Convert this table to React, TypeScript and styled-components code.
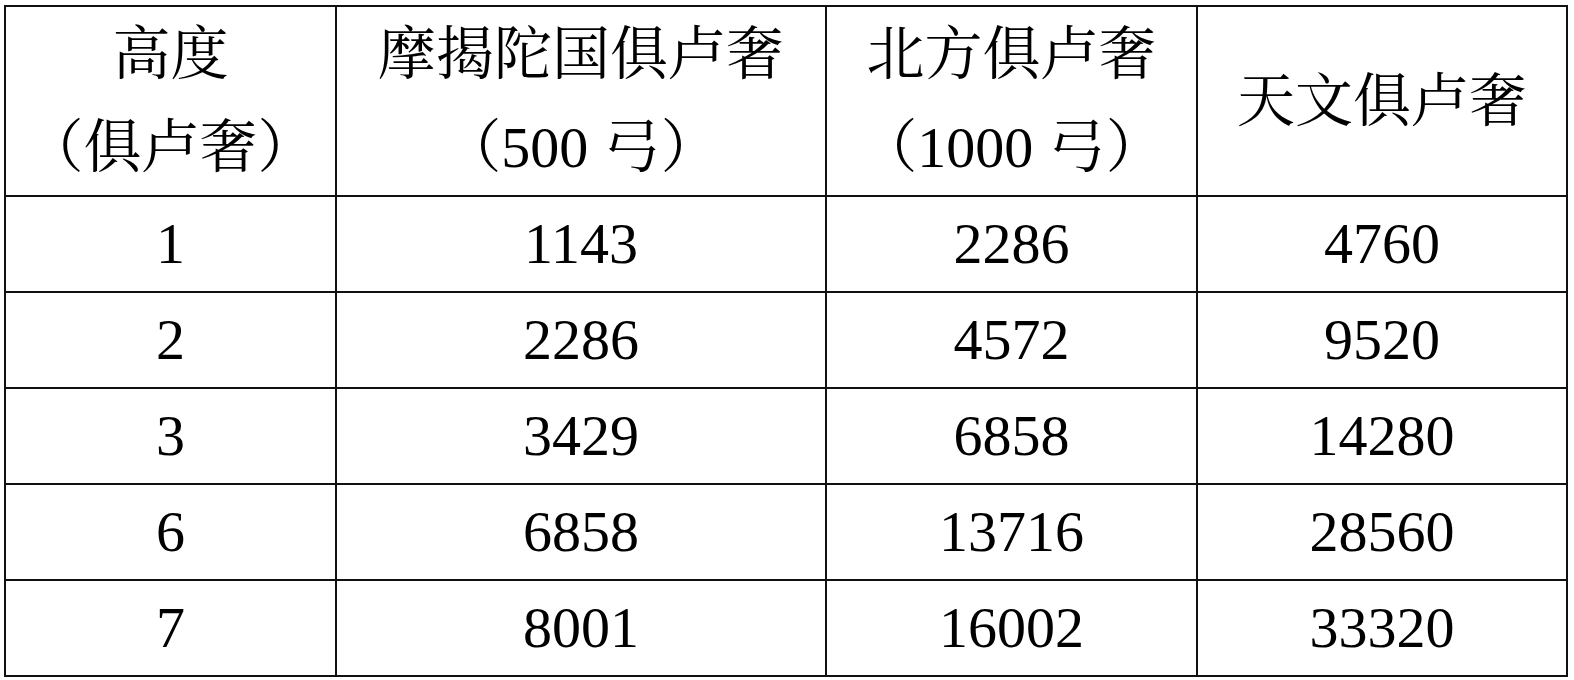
import React from 'react';
import styled, { createGlobalStyle } from 'styled-components';

const GlobalStyle = createGlobalStyle`
  html, body {
    margin: 0;
    padding: 0;
    background: #ffffff;
  }
  body {
    font-family: "Liberation Serif", "Noto Serif CJK SC", "Noto Sans CJK SC", serif;
    color: #000;
  }
`;

const Page = styled.div`
  padding: 5px 0 0 4px;
`;

const Table = styled.table`
  width: 1562px;
  border-collapse: collapse;
  table-layout: fixed;
  border: 2px solid #111;
`;

const HeadRow = styled.tr`
  height: 190px;
`;

const BodyRow = styled.tr`
  height: 96px;
`;

const HeadCell = styled.th`
  border: 2px solid #111;
  padding: 0;
  font-weight: normal;
  font-size: 58px;
  line-height: 93px;
  text-align: center;
  vertical-align: middle;
`;

const Cell = styled.td`
  border: 2px solid #111;
  padding: 0;
  font-size: 58px;
  line-height: 1;
  text-align: center;
  vertical-align: middle;
`;

const Line = styled.div`
  white-space: nowrap;
`;

const columns = [
  { width: 331, title: ['高度', '（俱卢奢）'] },
  { width: 490, title: ['摩揭陀国俱卢奢', '（500 弓）'] },
  { width: 371, title: ['北方俱卢奢', '（1000 弓）'] },
  { width: 370, title: ['天文俱卢奢'] },
];

const rows = [
  ['1', '1143', '2286', '4760'],
  ['2', '2286', '4572', '9520'],
  ['3', '3429', '6858', '14280'],
  ['6', '6858', '13716', '28560'],
  ['7', '8001', '16002', '33320'],
];

export default function App() {
  return (
    <Page>
      <GlobalStyle />
      <Table>
        <colgroup>
          {columns.map((c, i) => (
            <col key={i} style={{ width: c.width }} />
          ))}
        </colgroup>
        <thead>
          <HeadRow>
            {columns.map((c, i) => (
              <HeadCell key={i}>
                {c.title.map((t) => (
                  <Line key={t}>{t}</Line>
                ))}
              </HeadCell>
            ))}
          </HeadRow>
        </thead>
        <tbody>
          {rows.map((r) => (
            <BodyRow key={r[0]}>
              {r.map((v, i) => (
                <Cell key={i}>{v}</Cell>
              ))}
            </BodyRow>
          ))}
        </tbody>
      </Table>
    </Page>
  );
}
